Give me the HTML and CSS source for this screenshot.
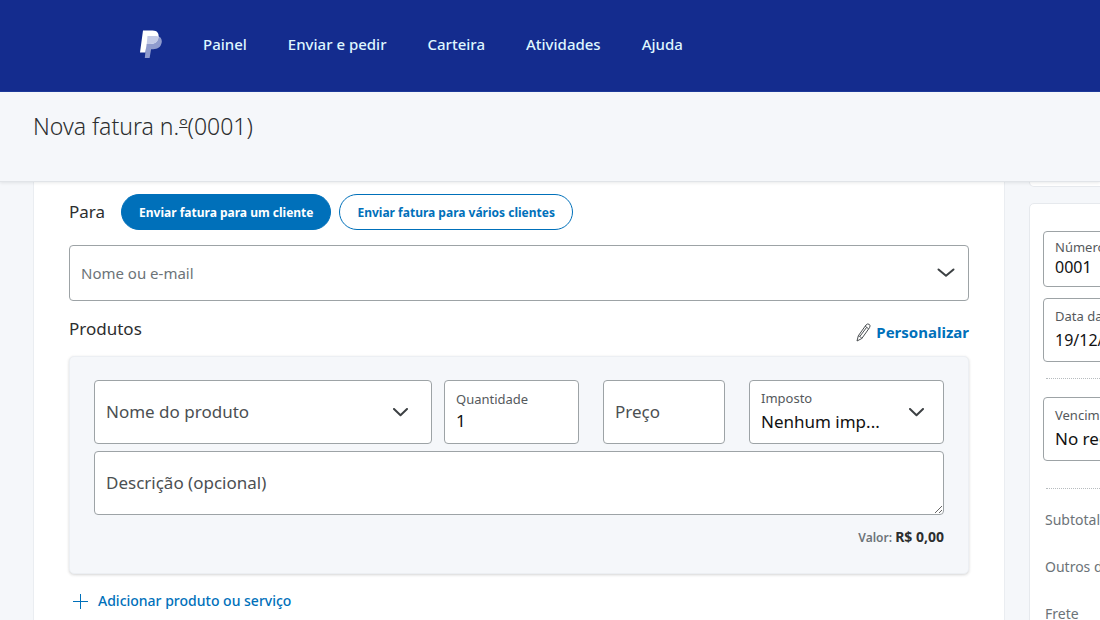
FILE: index.html
```html
<!DOCTYPE html>
<html lang="pt-BR">
<head>
<meta charset="utf-8">
<meta name="viewport" content="width=device-width, initial-scale=1">
<title>Nova fatura</title>
<link rel="stylesheet" href="styles.css">
</head>
<body>
<header class="topbar">
  <a class="logo" href="#" aria-label="PayPal">
    <svg width="22" height="29" viewBox="0 0 22 29" aria-hidden="true">
      <path d="M7 6h10.500c3.200.8 4.800 3.200 4.200 6.600-.8 4.600-4 6.700-8.600 6.700h-2L9.600 28H4.800z" fill="#8f9bcd"/>
      <path d="M3 .5h9.600c4.600 0 6.600 2.800 5.900 6.800-.8 4.600-4 6.800-8.500 6.800H6.700L5.300 22.600H0z" fill="#fff"/>
      <path d="M7.500 6H16q1.600 0 2.600.4-.1 7.700-8.600 7.700H6.700z" fill="#c3cae6"/>
    </svg>
  </a>
  <nav class="nav">
    <a href="#">Painel</a>
    <a href="#">Enviar e pedir</a>
    <a href="#">Carteira</a>
    <a href="#">Atividades</a>
    <a href="#">Ajuda</a>
  </nav>
</header>

<div class="titlebar"><h1>Nova fatura n.<span class="ordinal">º</span>(0001)</h1></div>

<main class="page">
  <section class="invoice">
    <div class="recipient">
      <h2>Para</h2>
      <button class="pill pill-active" type="button">Enviar fatura para um cliente</button>
      <button class="pill" type="button">Enviar fatura para vários clientes</button>
    </div>
    <div class="field email">
      <input type="text" placeholder="Nome ou e-mail" aria-label="Nome ou e-mail">
      <svg class="chevron" width="18" height="10" viewBox="0 0 18 10" aria-hidden="true"><path d="M1.500 1.500 9 7.800l7.500-6.300"/></svg>
    </div>
    <div class="products-head">
      <h2>Produtos</h2>
      <a class="customize" href="#">
        <svg width="15" height="19" viewBox="0 0 15 19" aria-hidden="true"><path d="M1 18l1.300-5.200L10 2q1.700-1.800 3.300-.6 1.500 1.200.2 3.300L5.800 15.500zM2.300 12.800q2.200.2 3.500 2.700M9.200 3.200l3.400 2.600M4.200 13 10.500 4.500"/></svg>
        Personalizar
      </a>
    </div>
    <div class="item">
      <div class="item-row">
        <div class="product">
          <div class="field name">
            <input type="text" placeholder="Nome do produto" aria-label="Nome do produto">
            <svg class="chevron" width="15" height="9" viewBox="0 0 15 9" aria-hidden="true"><path d="M1 1l6.500 6.200L14 1"/></svg>
          </div>
          <div class="field quantity">
            <div class="stack"><label for="qty">Quantidade</label><input id="qty" type="text" value="1"></div>
          </div>
        </div>
        <div class="field"><input type="text" placeholder="Preço" aria-label="Preço"></div>
        <div class="field tax">
          <div class="stack"><label for="tax">Imposto</label><select id="tax"><option>Nenhum imp...</option></select></div>
          <svg class="chevron" width="15" height="9" viewBox="0 0 15 9" aria-hidden="true"><path d="M1 1l6.500 6.200L14 1"/></svg>
        </div>
      </div>
      <textarea class="description" rows="1" placeholder="Descrição (opcional)" aria-label="Descrição (opcional)"></textarea>
      <p class="amount">Valor: <strong>R$ 0,00</strong></p>
    </div>
    <button class="add" type="button">
      <svg width="15" height="15" viewBox="0 0 15 15" aria-hidden="true"><path d="M7.500 0v15M0 7.500h15"/></svg>
      Adicionar produto ou serviço
    </button>
  </section>

  <aside class="side">
    <div class="side-top"></div>
    <div class="details">
      <div class="field compact"><div class="stack"><label for="num">Número da fatura</label><input id="num" type="text" value="0001"></div></div>
      <div class="field date"><div class="stack"><label for="date">Data da fatura</label><input id="date" type="text" value="19/12/2022"></div></div>
      <hr>
      <div class="field"><div class="stack"><label for="due">Vencimento</label><select id="due"><option>No recebimento</option></select></div></div>
      <hr>
      <ul class="totals">
        <li>Subtotal</li>
        <li>Outros descontos</li>
        <li>Frete</li>
      </ul>
    </div>
  </aside>
</main>
</body>
</html>
```
FILE: styles.css
```css
* { box-sizing: border-box; }
body {
  margin: 0;
  height: 100vh;
  display: flex;
  flex-direction: column;
  overflow: hidden;
  background: #f5f7fa;
  color: #2c2e2f;
  font-family: "Noto Sans", "Open Sans", sans-serif;
}
h1, h2, p, ul { margin: 0; padding: 0; font-weight: 400; }
ul { list-style: none; }
a { text-decoration: none; }
svg { flex: none; display: block; }
input, select, textarea, button { font: inherit; color: inherit; }

.topbar {
  flex: none;
  display: flex;
  align-items: center;
  gap: 41px;
  height: 92px;
  padding: 0 140px 2px;
  background: #142c8e;
  border-bottom: 1px solid #1e3a9c;
}
.nav { display: flex; gap: 41px; padding-bottom: 2px; }
.nav a { color: #dff6ff; font-size: 15px; line-height: 24px; font-weight: 500; white-space: nowrap; }

.titlebar {
  flex: none;
  position: relative;
  z-index: 1;
  height: 90px;
  padding: 17px 33px;
  background: #f5f7fa;
  border-bottom: 1px solid #e1e4e8;
  box-shadow: 0 1px 3px rgba(44, 46, 47, .1);
}
h1 { font-size: 23px; line-height: 34px; font-weight: 300; }
.ordinal { text-decoration: underline 1px; text-underline-offset: -8px; text-decoration-skip-ink: none; }

.page {
  flex: 1;
  min-height: 0;
  width: calc(100% + 229px);
  display: grid;
  grid-template-columns: minmax(0, 1fr) 300px;
  gap: 24px;
  padding-left: 33px;
}
.invoice {
  padding: 12px 35px;
  background: #fff;
  border: solid #eaedf1;
  border-width: 0 1px;
}
h2 { font-size: 17px; line-height: 24px; }
.recipient { display: flex; align-items: center; gap: 8px; }
.recipient h2 { margin-right: 8px; }
.pill {
  height: 36px;
  padding: 0 17px;
  border: 1px solid #0070ba;
  border-radius: 18px;
  background: #fff;
  color: #0070ba;
  font-size: 12px;
  font-weight: 700;
  white-space: nowrap;
}
.pill-active { background: #0070ba; color: #fff; }

.field {
  display: flex;
  align-items: center;
  height: 64px;
  padding: 0 11px;
  background: #fff;
  border: 1px solid #9da3a6;
  border-radius: 4px;
  color: #111;
}
.field input, .field select {
  width: 100%;
  min-width: 0;
  height: 24px;
  padding: 0;
  border: 0;
  outline: 0;
  background: none;
  appearance: none;
  font-size: 17px;
  line-height: 24px;
}
.field ::placeholder, .description::placeholder { color: #4b4f52; opacity: 1; }
.stack { flex: 1; min-width: 0; display: flex; flex-direction: column; gap: 2px; padding-bottom: 3px; }
.stack label { color: #55595c; font-size: 13px; line-height: 20px; white-space: nowrap; }
.chevron { margin-right: 12px; fill: none; stroke: #3c4043; stroke-width: 2; stroke-linecap: round; stroke-linejoin: round; }

.email { height: 56px; margin-top: 15px; }
.email input { font-size: 15px; }
.email ::placeholder { color: #6c7378; }
.email .chevron { margin-right: 2px; }

.products-head { display: flex; justify-content: space-between; align-items: center; margin-top: 16px; height: 30px; }
.products-head h2 { align-self: flex-start; }
.customize { display: flex; align-items: center; gap: 5px; color: #0070ba; font-size: 15px; line-height: 24px; font-weight: 700; }
.customize svg { fill: none; stroke: #4b4f52; stroke-width: 1; stroke-linejoin: round; }

.item {
  margin-top: 9px;
  padding: 23px 24px 25px;
  background: #f5f7fa;
  border: 1px solid #eceff3;
  border-radius: 5px;
  box-shadow: 0 1px 3px rgba(44, 46, 47, .2);
}
.item-row { display: grid; grid-template-columns: minmax(0, 1fr) 122px 195px; column-gap: 24px; }
.product { display: flex; gap: 12px; }
.name { flex: 1; min-width: 0; }
.quantity { width: 135px; }
.quantity .stack { gap: 0; }
.tax .chevron { margin-right: 8px; }
.description {
  display: block;
  width: 100%;
  height: 64px;
  margin-top: 7px;
  padding: 19px 11px;
  border: 1px solid #9da3a6;
  border-radius: 4px;
  background: #fff;
  font-size: 17px;
  line-height: 24px;
}
.amount { margin-top: 12px; text-align: right; color: #6c7378; font-size: 12px; line-height: 20px; font-weight: 600; }
.amount strong { color: #2c2e2f; font-size: 14px; font-weight: 700; }

.add {
  display: flex;
  align-items: center;
  gap: 10px;
  margin-top: 15px;
  padding: 0 4px;
  border: 0;
  background: none;
  color: #0070ba;
  font-size: 14px;
  line-height: 24px;
  font-weight: 500;
}
.add svg { stroke: #0070ba; stroke-width: 1; }

.side { display: flex; flex-direction: column; gap: 16px; min-height: 0; }
.side-top { flex: none; height: 5px; background: #fff; border: 1px solid #e6e9ed; border-top: 0; border-radius: 0 0 5px 5px; }
.details { flex: 1; padding: 27px 13px; background: #fff; border: 1px solid #e6e9ed; border-radius: 5px 5px 0 0; }
.compact { height: 56px; margin-bottom: 11px; }
.compact .stack { gap: 2px; padding-bottom: 2px; }
.compact .stack label { line-height: 16px; }
.compact input { height: 20px; font-size: 16px; line-height: 20px; }
.date input { font-size: 16px; }
hr { height: 0; margin: 16px 3px 18px; border: 0; border-top: 1px dotted #b7bcbf; }
.details hr:last-of-type { margin: 27px 3px 19px; }
.totals { display: grid; gap: 23px; padding-left: 2px; color: #6c7378; font-size: 14px; line-height: 24px; }
```
